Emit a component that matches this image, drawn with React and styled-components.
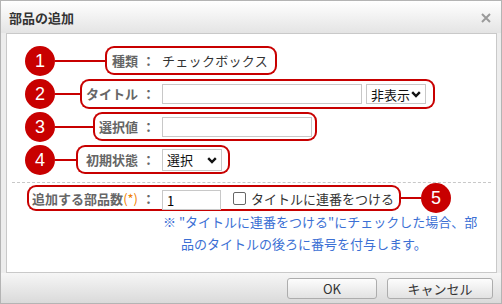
import React from "react";
import styled, { createGlobalStyle } from "styled-components";

const RED = "#c80000";

const Global = createGlobalStyle`
  html, body { margin: 0; padding: 0; background: #fff; }
  body {
    font-family: "Noto Sans CJK JP", "Noto Sans", sans-serif;
    font-size: 13px;
    color: #333;
  }
  * { box-sizing: border-box; }
`;

const Dialog = styled.div`
  width: 502px;
  height: 304px;
  border: 1px solid #b4b4b4;
  background: #ededed;
  display: flex;
  flex-direction: column;
`;

const TitleBar = styled.div`
  height: 32px;
  flex: none;
  display: flex;
  align-items: center;
  justify-content: space-between;
  padding: 0 10px 0 8px;
  background: linear-gradient(#ffffff, #e4e4e4);
`;

const Title = styled.h1`
  margin: 0;
  font-size: 13px;
  font-weight: bold;
  color: #333;
  line-height: 1;
`;

const CloseButton = styled.button`
  border: 0;
  background: none;
  padding: 0;
  width: 10px;
  height: 10px;
  display: flex;
  margin-top: 2px;
`;

const Panel = styled.div`
  flex: none;
  height: 240px;
  margin: 0 4px 0 5px;
  border: 1px solid #c9c9c9;
  background: #fff;
  padding: 10px 0 0 18px;
`;

const Row = styled.div`
  display: flex;
  align-items: center;
  height: ${(p) => p.$h || 33}px;
  margin: ${(p) => p.$mt || 0}px 0 0 ${(p) => p.$ml || 0}px;
`;

const Lead = styled.div`
  flex: none;
  width: ${(p) => p.$w}px;
  display: flex;
  align-items: center;
  justify-content: flex-end;
`;

const Marker = styled.span`
  flex: none;
  width: 30px;
  height: 30px;
  border-radius: 50%;
  background: ${RED};
  color: #fff;
  font-family: "Liberation Sans", Arial, sans-serif;
  font-size: 18px;
  display: flex;
  align-items: center;
  justify-content: center;
  line-height: 1;
`;

const Wire = styled.span`
  flex: ${(p) => (p.$w ? "none" : "1")};
  width: ${(p) => (p.$w ? `${p.$w}px` : "auto")};
  height: 2px;
  background: ${RED};
`;

const BoxHead = styled.div`
  flex: none;
  height: ${(p) => p.$h || 29}px;
  border: 2px solid ${RED};
  border-right: 0;
  border-radius: 9px 0 0 9px;
  padding: 0 7px 0 ${(p) => p.$pl || 4}px;
  display: flex;
  align-items: center;
  white-space: nowrap;
`;

const BoxTail = styled.div`
  flex: none;
  height: ${(p) => p.$h || 29}px;
  border: 2px solid ${RED};
  border-left: 0;
  border-radius: 0 9px 9px 0;
  padding-right: ${(p) => p.$pr || 7}px;
  display: flex;
  align-items: center;
  gap: ${(p) => p.$gap || 4}px;
  white-space: nowrap;
`;

const Label = styled.span`
  font-weight: bold;
  color: #666;
  line-height: 1;
`;

const Colon = styled.span`
  margin-left: 4px;
`;

const Req = styled.span`
  color: #f08000;
  font-weight: normal;
`;

const Value = styled.span`
  color: #333;
  line-height: 1;
  letter-spacing: ${(p) => p.$ls || 0}px;
`;

const TextInput = styled.input`
  width: ${(p) => p.$w}px;
  height: 20px;
  border: 1px solid #c8c8c8;
  background: #fff;
  font: inherit;
  font-size: 13px;
  color: #000;
  padding: 0 4px;
  margin: ${(p) => p.$mt || 0}px 0 0 0;
  outline: none;
`;

const SelectWrap = styled.div`
  position: relative;
  width: ${(p) => p.$w}px;
  height: ${(p) => p.$h || 20}px;
  flex: none;
`;

const Select = styled.select`
  appearance: none;
  width: 100%;
  height: 100%;
  border: 1px solid #c8c8c8;
  background: #fff;
  font: inherit;
  font-size: 13px;
  color: #111;
  padding: 0 0 0 4px;
  outline: none;
`;

const Chevron = styled.svg`
  position: absolute;
  right: 5px;
  top: 50%;
  margin-top: -3px;
  pointer-events: none;
`;

const Check = styled.input`
  appearance: none;
  width: 13px;
  height: 13px;
  margin: 0 1px 0 8px;
  border: 1px solid #666;
  border-radius: 2px;
  background: #fff;
`;

const Separator = styled.hr`
  margin: 6px 5px 0 -13px;
  border: 0;
  border-top: 1px dashed #c8c8c8;
  height: 0;
`;

const Note = styled.p`
  margin: 0 0 0 138px;
  padding-left: 18px;
  text-indent: -18px;
  font-size: 13px;
  line-height: 22px;
  color: #3b6fd4;
  white-space: nowrap;
`;

const Footer = styled.div`
  flex: 1;
  display: flex;
  justify-content: flex-end;
  align-items: center;
  gap: 10px;
  padding-right: 8px;
  background: linear-gradient(#f6f6f6, #dadada);
`;

const Button = styled.button`
  width: ${(p) => p.$w}px;
  height: 21px;
  border: 1px solid #adadad;
  border-radius: 3px;
  background: linear-gradient(#fdfdfd, #e2e2e2);
  font: inherit;
  font-size: 13px;
  color: #333;
  padding: 0;
  line-height: 1;
`;

const ChevronIcon = () => (
  <Chevron width="10" height="7" viewBox="0 0 10 7">
    <path d="M1.2 1.2 L5 5 L8.8 1.2" fill="none" stroke="#111" strokeWidth="2.4" />
  </Chevron>
);

const Dropdown = ({ w, h, value }) => (
  <SelectWrap $w={w} $h={h}>
    <Select defaultValue={value}>
      <option>{value}</option>
    </Select>
    <ChevronIcon />
  </SelectWrap>
);

const FieldLabel = ({ children }) => (
  <Label>
    {children}
    <Colon>：</Colon>
  </Label>
);

export default function App() {
  return (
    <>
      <Global />
      <Dialog>
        <TitleBar>
          <Title>部品の追加</Title>
          <CloseButton aria-label="close">
            <svg width="10" height="10" viewBox="0 0 10 10">
              <path d="M1 1 L9 9 M9 1 L1 9" stroke="#9a9a9a" strokeWidth="2" />
            </svg>
          </CloseButton>
        </TitleBar>
        <Panel>
          <Row>
            <Lead $w={137}>
              <Marker>1</Marker>
              <Wire />
              <BoxHead $pl={5}>
                <FieldLabel>種類</FieldLabel>
              </BoxHead>
            </Lead>
            <BoxTail $pr={7}>
              <Value $ls={0.3}>チェックボックス</Value>
            </BoxTail>
          </Row>
          <Row>
            <Lead $w={137}>
              <Marker>2</Marker>
              <Wire />
              <BoxHead $h={30} $pl={4}>
                <FieldLabel>タイトル</FieldLabel>
              </BoxHead>
            </Lead>
            <BoxTail $h={30} $pr={7} $gap={4}>
              <TextInput $w={200} />
              <Dropdown w={60} h={20} value="非表示" />
            </BoxTail>
          </Row>
          <Row>
            <Lead $w={137}>
              <Marker>3</Marker>
              <Wire />
              <BoxHead $pl={4}>
                <FieldLabel>選択値</FieldLabel>
              </BoxHead>
            </Lead>
            <BoxTail $pr={3}>
              <TextInput $w={150} />
            </BoxTail>
          </Row>
          <Row>
            <Lead $w={137}>
              <Marker>4</Marker>
              <Wire />
              <BoxHead $pl={8}>
                <FieldLabel>初期状態</FieldLabel>
              </BoxHead>
            </Lead>
            <BoxTail $pr={6}>
              <Dropdown w={60} h={22} value="選択" />
            </BoxTail>
          </Row>
          <Separator />
          <Row $h={26} $ml={-4} $mt={2}>
            <Lead $w={141}>
              <BoxHead $h={26} $pl={3}>
                <Label>
                  追加する部品数<Req>(*)</Req>
                  <Colon>：</Colon>
                </Label>
              </BoxHead>
            </Lead>
            <BoxTail $h={26} $pr={5} $gap={4}>
              <TextInput $w={59} $mt={4} defaultValue="1" />
              <Check type="checkbox" />
              <Value>タイトルに連番をつける</Value>
            </BoxTail>
            <Wire $w={20} />
            <Marker>5</Marker>
          </Row>
          <Note>
            ※ "タイトルに連番をつける"にチェックした場合、部
            <br />
            品のタイトルの後ろに番号を付与します。
          </Note>
        </Panel>
        <Footer>
          <Button $w={90}>OK</Button>
          <Button $w={106}>キャンセル</Button>
        </Footer>
      </Dialog>
    </>
  );
}
